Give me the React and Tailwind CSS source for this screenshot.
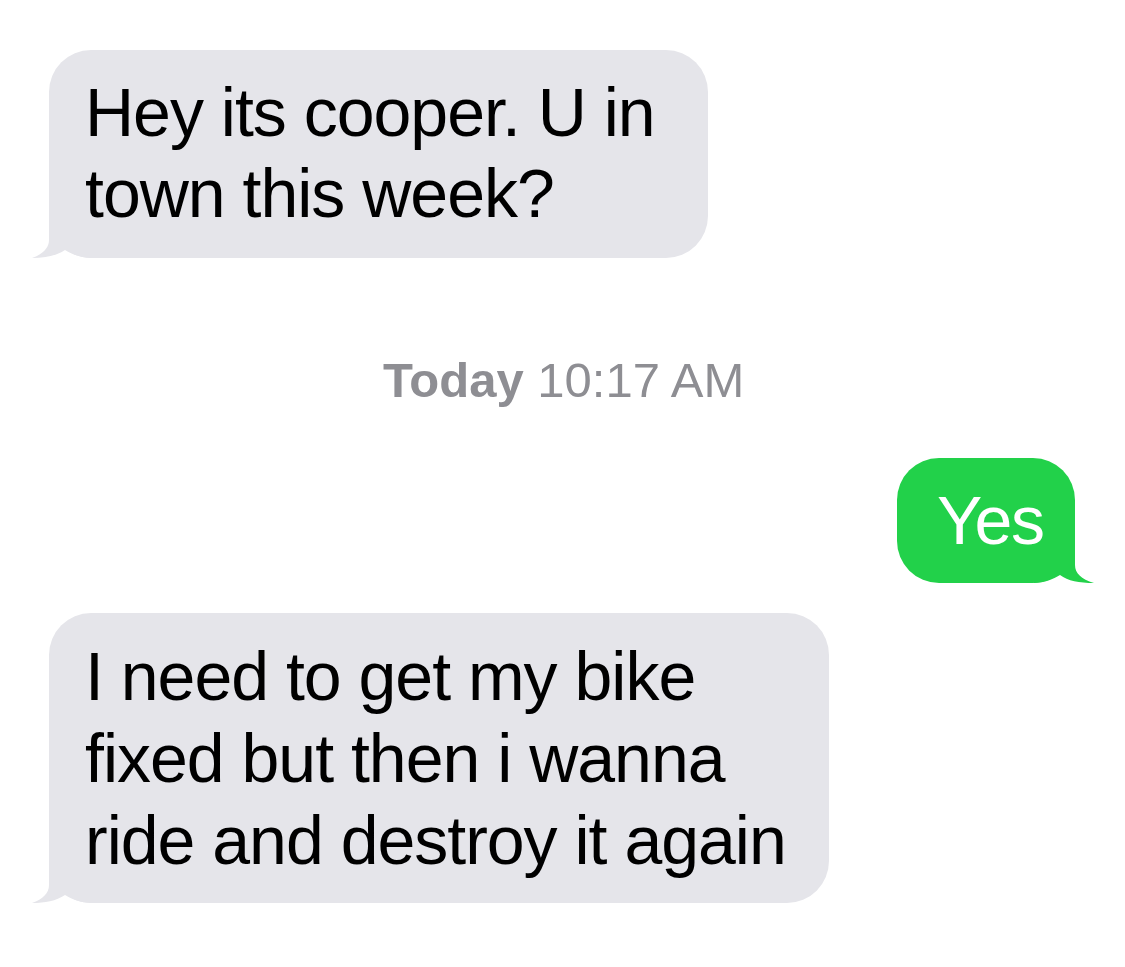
import React from "react";

const font = { fontFamily: '"Liberation Sans", Arial, sans-serif' };

function LeftTail({ color }) {
  return (
    <svg className="absolute left-[-17px] bottom-0" width="60" height="42" viewBox="0 0 60 42">
      <path d="M17 0 L17 24 C17 32 11 38 0 42 C13 42 24 40 33 34 C40 38 48 42 60 42 L60 0 Z" fill={color} />
    </svg>
  );
}

function RightTail({ color }) {
  return (
    <svg className="absolute right-[-19px] bottom-0" width="60" height="42" viewBox="0 0 60 42">
      <path d="M41 0 L41 24 C41 32 47 38 60 42 C45 42 34 40 26 34 C19 38 11 42 0 42 L0 0 Z" fill={color} />
    </svg>
  );
}

export default function App() {
  return (
    <div className="w-[1125px] h-[967px] bg-white overflow-hidden flex flex-col" style={font}>
      <div className="relative ml-[49px] mt-[50px] w-[659px] h-[208px] rounded-[42px] bg-[#e5e5ea] pl-[36px] pt-[22px] text-[68px] leading-[81px] text-black tracking-[-1px]">
        <LeftTail color="#e5e5ea" />
        <div className="relative">Hey its cooper. U in<br />town this week?</div>
      </div>
      <div className="mt-[95px] pl-[383px] text-[49px] leading-[54px] text-[#8e8e93]">
        <span className="font-bold">Today</span> 10:17 AM
      </div>
      <div className="self-end relative mr-[50px] mt-[51px] w-[178px] h-[125px] rounded-[42px] bg-[#22d14a] text-white text-[68px] leading-[83px] pl-[40px] pt-[21px] tracking-[-1.5px]">
        <RightTail color="#22d14a" />
        <div className="relative">Yes</div>
      </div>
      <div className="relative ml-[49px] mt-[30px] w-[780px] h-[290px] rounded-[42px] bg-[#e5e5ea] pl-[36px] pt-[22px] text-[68px] leading-[82px] text-black tracking-[-1px]">
        <LeftTail color="#e5e5ea" />
        <div className="relative">I need to get my bike<br />fixed but then i wanna<br />ride and destroy it again</div>
      </div>
    </div>
  );
}
